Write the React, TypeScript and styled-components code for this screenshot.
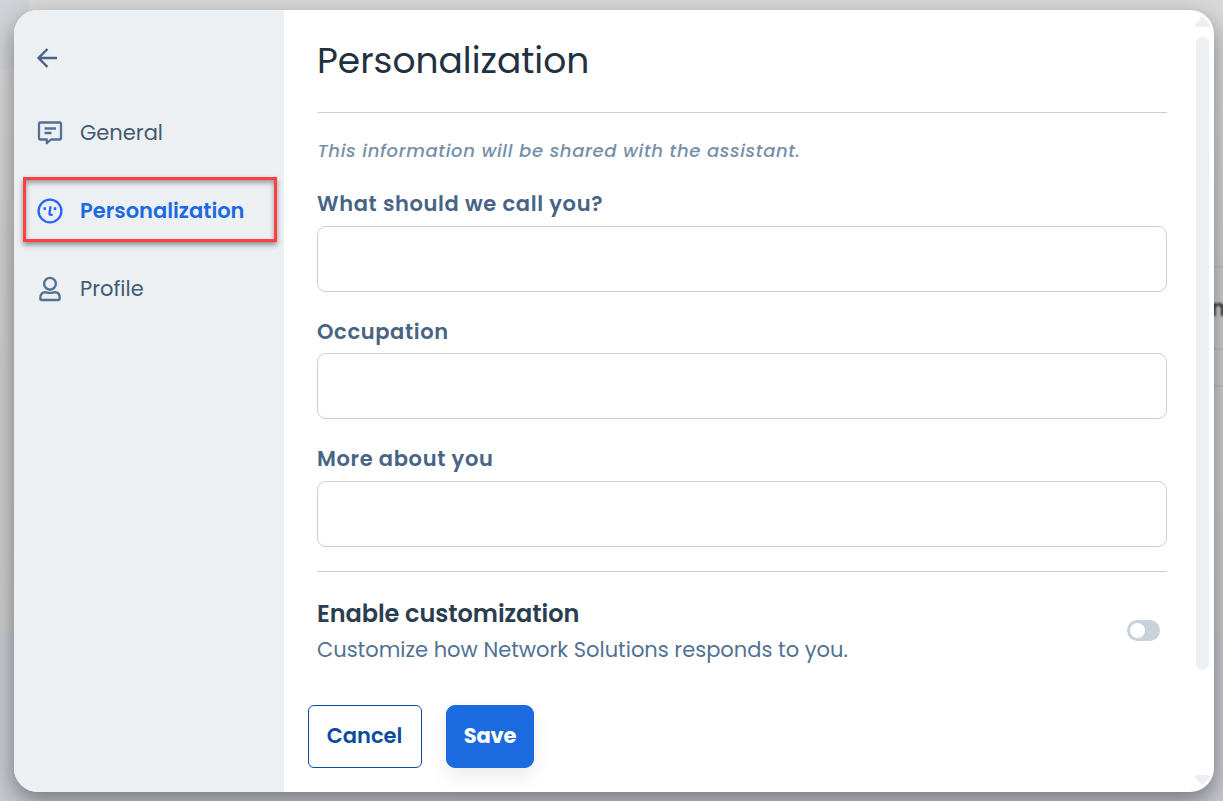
import React, { useState } from 'react';
import styled, { createGlobalStyle, css } from 'styled-components';

const GlobalStyle = createGlobalStyle`
  * { box-sizing: border-box; }
  body { margin: 0; overflow: hidden; font-family: Poppins, Inter, sans-serif; }
  button, input { font-family: inherit; }
`;

const Backdrop = styled.div`
  position: relative;
  width: 1223px;
  height: 801px;
  padding: 10px 9px 9px 14px;
  overflow: hidden;
  background:
    linear-gradient(90deg, #d2d3d8 0 29px, transparent 29px) 0 0 / 100% 69px no-repeat,
    linear-gradient(#d9d9d9 0, #cfcfcf 260px, #cccccc 630px, #c8cad2 635px, #c8cad2 100%);
`;

const PageRule = styled.span<{ $top: number }>`
  position: absolute;
  right: 0;
  top: ${p => p.$top}px;
  width: 9px;
  height: 2px;
  background: #bfc1c6;
`;

const PageText = styled.span`
  position: absolute;
  left: 1211px;
  top: 295px;
  color: #2b3340;
  font-size: 22px;
  line-height: 28px;
  font-weight: 600;
  filter: blur(1px);
`;

const Dialog = styled.div`
  position: relative;
  display: flex;
  width: 1200px;
  height: 782px;
  border-radius: 24px;
  background: #fff;
  box-shadow: 0 9px 24px rgba(0, 0, 0, 0.42);
`;

const Sidebar = styled.nav`
  width: 270px;
  flex: none;
  padding: 36px 7px 0 9px;
  background: #ecf0f3;
  border-radius: 24px 0 0 24px;
`;

const BackButton = styled.button`
  display: flex;
  width: 24px;
  height: 24px;
  margin: 0 0 29px 12px;
  padding: 0;
  border: 0;
  background: none;
  color: #486484;
`;

const NavItem = styled.button<{ $active?: boolean }>`
  display: flex;
  align-items: center;
  gap: 16px;
  width: 254px;
  height: 65px;
  margin-bottom: 13px;
  padding: 2px 0 0 10px;
  border: 3px solid transparent;
  background: none;
  color: #435a72;
  font-size: 21px;
  text-align: left;
  svg { flex: none; color: #527294; }
  ${p => p.$active && css`
    border-color: #fb4141;
    color: #1b6ae0;
    font-weight: 600;
    box-shadow: 0 3px 5px rgba(0, 0, 0, 0.4), inset 0 3px 5px rgba(0, 0, 0, 0.35);
    svg { color: #2962ff; }
  `}
`;

const Content = styled.main`
  display: flex;
  flex-direction: column;
  width: 850px;
  margin-left: 33px;
`;

const Title = styled.h1`
  margin: 0;
  height: 103px;
  padding-top: 26px;
  border-bottom: 1px solid #c5cfdd;
  color: #22313f;
  font-size: 36px;
  line-height: 50px;
  font-weight: 400;
`;

const Note = styled.p`
  margin: 23px 0 0;
  padding-left: 0.6px;
  color: #7590ab;
  font-size: 18px;
  line-height: 29px;
  font-style: italic;
  font-weight: 500;
  letter-spacing: 0.62px;
`;

const Field = styled.label<{ $gap: number; $inner: number }>`
  display: flex;
  flex-direction: column;
  gap: ${p => p.$inner}px;
  margin-top: ${p => p.$gap}px;
  color: #486484;
  font-size: 21px;
  line-height: 32px;
  font-weight: 600;
  letter-spacing: 0.63px;
`;

const Input = styled.input`
  height: 66px;
  padding: 0 20px;
  border: 1px solid #c5cfdd;
  border-radius: 9px;
  background: #fff;
  font-size: 21px;
  outline: none;
`;

const SettingRow = styled.section`
  display: flex;
  justify-content: space-between;
  height: 134px;
  margin-top: 24px;
  padding: 24px 7px 0 0;
  border-top: 1px solid #c5cfdd;
`;

const SettingTitle = styled.h2`
  margin: 0;
  color: #2b3e50;
  font-size: 24px;
  line-height: 36px;
  font-weight: 600;
  letter-spacing: -0.05px;
`;

const SettingText = styled.p`
  margin: 0;
  color: #527294;
  font-size: 21px;
  line-height: 36px;
`;

const Toggle = styled.button<{ $on: boolean }>`
  display: flex;
  justify-content: ${p => (p.$on ? 'flex-end' : 'flex-start')};
  width: 33px;
  height: 21px;
  margin-top: 24px;
  padding: 3px;
  border: 0;
  border-radius: 11px;
  background: ${p => (p.$on ? '#1b6ae0' : '#c9d2dc')};
`;

const Knob = styled.span`
  width: 15px;
  height: 15px;
  border-radius: 50%;
  background: #fff;
`;

const Actions = styled.div`
  display: flex;
  gap: 24px;
  margin-left: -9px;
`;

const Button = styled.button<{ $primary?: boolean }>`
  width: ${p => (p.$primary ? 88 : 114)}px;
  height: 63px;
  padding: 0 ${p => (p.$primary ? 0 : 1)}px 2px 0;
  border: 1px solid ${p => (p.$primary ? '#1b6ae0' : '#0b4ca0')};
  border-radius: ${p => (p.$primary ? 9 : 6)}px;
  background: ${p => (p.$primary ? '#1b6ae0' : '#fff')};
  color: ${p => (p.$primary ? '#fff' : '#0b4ca0')};
  font-size: 21px;
  font-weight: ${p => (p.$primary ? 700 : 600)};
  letter-spacing: ${p => (p.$primary ? -0.2 : 0)}px;
  box-shadow: ${p => (p.$primary ? '0 9px 20px rgba(0, 0, 0, 0.08)' : 'none')};
`;

const Scrollbar = styled.div`
  display: flex;
  flex-direction: column;
  align-items: center;
  width: 15px;
  margin-left: 28px;
  padding-top: 6px;
  svg { display: block; flex: none; }
`;

const Thumb = styled.div`
  width: 13px;
  height: 633px;
  margin: 9px 0 104px;
  border-radius: 7px;
  background: #ecf0f3;
`;

const ArrowIcon = () => (
  <svg width="24" height="24" viewBox="0 0 24 24" fill="none" stroke="currentColor" strokeWidth="2.4">
    <path d="M22 12H4M12.500 3l-9 9 9 9" />
  </svg>
);

const ChatIcon = () => (
  <svg width="28" height="28" viewBox="0 0 28 28" fill="none" stroke="currentColor" strokeWidth="2.3">
    <path d="M4.500 3.500h19q1.500 0 1.500 1.500v14q0 1.500-1.500 1.500H15l-4.200 3.700v-3.700H4.500Q3 20.500 3 19V5q0-1.500 1.500-1.500Z" strokeLinejoin="round" />
    <path d="M8.500 9.500h11.500M8.500 14h7" />
  </svg>
);

const FaceIcon = () => (
  <svg width="28" height="28" viewBox="0 0 28 28" fill="none" stroke="currentColor" strokeWidth="2.3">
    <circle cx="14" cy="14" r="11.4" />
    <path d="m14.600 9.300-1.100 6.700q-.3 1.800 1.300 1.800h1.900" />
    <path d="M7.500 11.700h2.500M17.800 11.700h2.500" strokeWidth="2.700" />
  </svg>
);

const PersonIcon = () => (
  <svg width="28" height="28" viewBox="0 0 28 28" fill="none" stroke="currentColor" strokeWidth="2.4">
    <circle cx="14" cy="8.800" r="5.900" />
    <path d="M6 25h16q1.700 0 1.700-2c0-3.800-2-5.700-4.700-5.700-2 0-3 .6-5 .6s-3-.6-5-.6c-2.700 0-4.700 1.900-4.700 5.700q0 2 1.700 2Z" />
  </svg>
);

const navItems = [
  { label: 'General', icon: <ChatIcon /> },
  { label: 'Personalization', icon: <FaceIcon /> },
  { label: 'Profile', icon: <PersonIcon /> },
];

const fields = [
  { label: 'What should we call you?', gap: 23, inner: 6 },
  { label: 'Occupation', gap: 24, inner: 5 },
  { label: 'More about you', gap: 24, inner: 6 },
];

export default function App() {
  const [enabled, setEnabled] = useState(false);
  return (
    <Backdrop>
      <GlobalStyle />
      <PageRule $top={266} />
      <PageRule $top={348} />
      <PageRule $top={385} />
      <PageText>n</PageText>
      <Dialog>
        <Sidebar>
          <BackButton aria-label="Back"><ArrowIcon /></BackButton>
          {navItems.map(item => (
            <NavItem key={item.label} $active={item.label === 'Personalization'}>
              {item.icon}
              <span>{item.label}</span>
            </NavItem>
          ))}
        </Sidebar>
        <Content>
          <Title>Personalization</Title>
          <Note>This information will be shared with the assistant.</Note>
          {fields.map(field => (
            <Field key={field.label} $gap={field.gap} $inner={field.inner}>
              <span>{field.label}</span>
              <Input />
            </Field>
          ))}
          <SettingRow>
            <div>
              <SettingTitle>Enable customization</SettingTitle>
              <SettingText>Customize how Network Solutions responds to you.</SettingText>
            </div>
            <Toggle $on={enabled} onClick={() => setEnabled(!enabled)} aria-label="Enable customization">
              <Knob />
            </Toggle>
          </SettingRow>
          <Actions>
            <Button>Cancel</Button>
            <Button $primary>Save</Button>
          </Actions>
        </Content>
        <Scrollbar>
          <svg width="15" height="12" viewBox="0 0 15 12" fill="#ecf0f3">
            <path d="M6 1.500Q7.500 0 9 1.500l5.500 7q1.500 2.500-1 2.500h-12Q-1 11 .5 8.500Z" />
          </svg>
          <Thumb />
          <svg width="15" height="12" viewBox="0 0 15 12" fill="#ecf0f3">
            <path d="M6 10.500Q7.500 12 9 10.500l5.500-7Q16 1 13.500 1h-12Q-1 1 .5 3.500Z" />
          </svg>
        </Scrollbar>
      </Dialog>
    </Backdrop>
  );
}
